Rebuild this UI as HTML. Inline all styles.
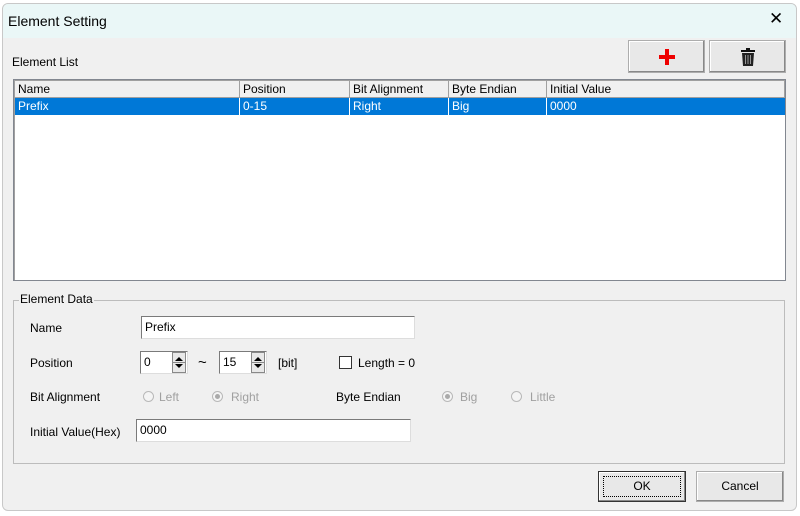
<!DOCTYPE html>
<html><head><meta charset="utf-8"><style>
*{box-sizing:border-box;margin:0;padding:0}
body{width:800px;height:516px;background:#fff;font-family:"Liberation Sans",sans-serif;font-size:12px;color:#000;position:relative;overflow:hidden}
.win{position:absolute;left:2px;top:3px;width:795px;height:508px;background:#f0f0f0;border:1px solid #c8c8c8;border-radius:6px;overflow:hidden}
.title{position:absolute;left:0;top:0;width:100%;height:34px;background:#eaf7f7}
.c{position:absolute;left:-1px;top:-1px;width:800px;height:516px}
.a{position:absolute;white-space:nowrap}
.btn{position:absolute;background:#e8e8e8;border:1px solid #adadad;box-shadow:inset -1px -1px 0 #888,inset 1px 1px 0 #fff;text-align:center}
.list{position:absolute;left:12px;top:78px;width:773px;height:202px;background:#fff;border:1px solid #828790;box-shadow:inset 1px 1px 0 #a0a0a0}
.hd{position:absolute;top:1px;height:17px;border-right:1px solid #a0a0a0;border-bottom:1px solid #a0a0a0;background:#f0f0f0;padding-left:3px;line-height:16px}
.row{position:absolute;left:1px;top:18px;width:770px;height:17px;background:#0078d7;color:#fff}
.row span{position:absolute;top:1px}
.sep{position:absolute;top:0;width:1px;height:17px;background:#fff}
.grp{position:absolute;left:13px;top:299px;width:772px;height:164px;border:1px solid #bcbcbc}
.inp{position:absolute;background:#fff;border:1px solid #7a7a7a;border-right-color:#ddd;border-bottom-color:#ddd;padding-left:3px;line-height:20px}
.spin{position:absolute;width:14px;height:21px;border:1px solid #888;background:#e8e8e8}
.gray{color:#a0a0a0}
.rad{position:absolute;width:11px;height:11px;border-radius:50%;border:1px solid #b8b8b8;background:#f4f4f4}
</style></head><body>
<div class="win">
<div class="title"></div>
<div class="a" style="left:5px;top:9px;font-size:14px">Element Setting</div>
<div class="a" style="left:766px;top:5px;font-size:17px">✕</div>
</div>
<div class="c">
<div class="a" style="left:13px;top:56px">Element List</div>
<div class="btn" style="left:629px;top:41px;width:77px;height:33px"><svg width="20" height="20" style="margin-top:6px" viewBox="0 0 20 20"><path d="M10 2v16M2 10h16" stroke="#e00" stroke-width="4"/></svg></div>
<div class="btn" style="left:710px;top:41px;width:77px;height:33px"><svg width="18" height="20" style="margin-top:6px" viewBox="0 0 18 20"><rect x="2" y="3" width="14" height="2" fill="#111"/><rect x="7" y="1" width="4" height="2" fill="#111"/><path d="M3 6h12l-1 13H4z" fill="#222"/><path d="M6.5 8v9M9 8v9M11.5 8v9" stroke="#999" stroke-width="1"/></svg></div>
<div class="list" style="left:14px;top:80px">
<div class="hd" style="left:1px;width:225px">Name</div>
<div class="hd" style="left:226px;width:110px">Position</div>
<div class="hd" style="left:336px;width:99px">Bit Alignment</div>
<div class="hd" style="left:435px;width:98px">Byte Endian</div>
<div class="hd" style="left:533px;width:238px">Initial Value</div>
<div class="row"><span style="left:3px">Prefix</span><div class="sep" style="left:224px"></div><span style="left:228px">0-15</span><div class="sep" style="left:334px"></div><span style="left:338px">Right</span><div class="sep" style="left:433px"></div><span style="left:437px">Big</span><div class="sep" style="left:531px"></div><span style="left:535px">0000</span></div>
</div>
<div class="grp" style="left:14px;top:301px"></div>
<div class="a" style="left:20px;top:293px;background:#f0f0f0;padding:0 1px">Element Data</div>
<div class="a" style="left:31px;top:322px">Name</div>
<div class="inp" style="left:142px;top:317px;width:274px;height:23px">Prefix</div>
<div class="a" style="left:31px;top:357px">Position</div>
<div class="inp" style="left:141px;top:352px;width:48px;height:23px">0</div>
<div class="spin" style="left:173px;top:353px"><svg width="12" height="19" viewBox="0 0 12 19"><path d="M2 8l4-4 4 4zM2 11l4 4 4-4z" fill="#000"/><path d="M0 9.5h12" stroke="#888"/></svg></div>
<div class="a" style="left:199px;top:355px;font-size:15px">~</div>
<div class="inp" style="left:220px;top:352px;width:48px;height:23px">15</div>
<div class="spin" style="left:252px;top:353px"><svg width="12" height="19" viewBox="0 0 12 19"><path d="M2 8l4-4 4 4zM2 11l4 4 4-4z" fill="#000"/><path d="M0 9.5h12" stroke="#888"/></svg></div>
<div class="a" style="left:279px;top:357px">[bit]</div>
<div class="a" style="left:340px;top:357px;width:13px;height:13px;border:1px solid #333;background:#fff"></div>
<div class="a" style="left:359px;top:357px">Length = 0</div>
<div class="a" style="left:31px;top:391px">Bit Alignment</div>
<div class="rad" style="left:144px;top:392px"></div><div class="a gray" style="left:160px;top:391px">Left</div>
<div class="rad" style="left:213px;top:392px"><div style="margin:2px;width:5px;height:5px;border-radius:50%;background:#aaa"></div></div><div class="a gray" style="left:232px;top:391px">Right</div>
<div class="a" style="left:337px;top:391px">Byte Endian</div>
<div class="rad" style="left:443px;top:392px"><div style="margin:2px;width:5px;height:5px;border-radius:50%;background:#aaa"></div></div><div class="a gray" style="left:461px;top:391px">Big</div>
<div class="rad" style="left:512px;top:392px"></div><div class="a gray" style="left:531px;top:391px">Little</div>
<div class="a" style="left:31px;top:426px">Initial Value(Hex)</div>
<div class="inp" style="left:137px;top:420px;width:275px;height:23px">0000</div>
<div class="btn" style="left:599px;top:472px;width:88px;height:31px;line-height:29px;border:1px solid #333"><div style="position:absolute;left:4px;top:4px;right:4px;bottom:4px;border:1px dotted #000"></div>OK</div>
<div class="btn" style="left:697px;top:472px;width:88px;height:31px;line-height:29px">Cancel</div>
</div>
</body></html>
